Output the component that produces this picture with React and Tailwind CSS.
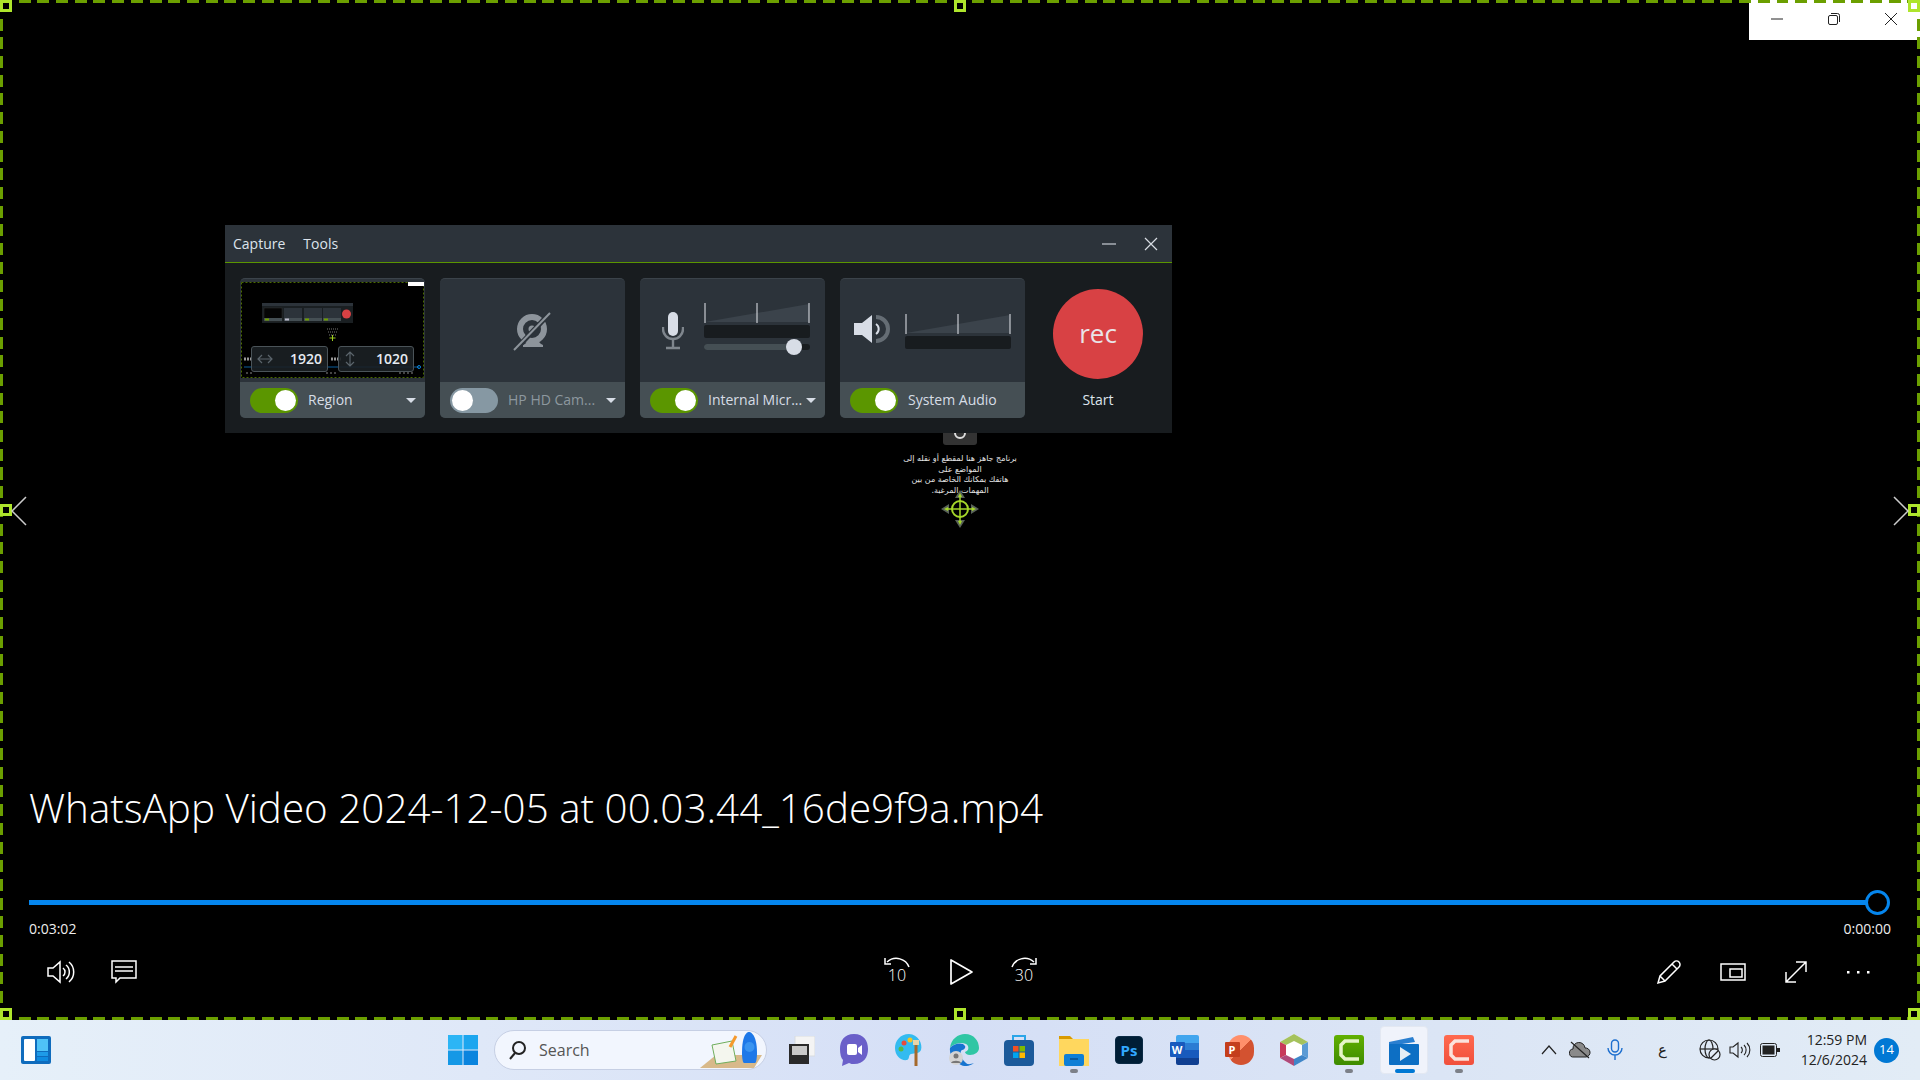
import { Fragment } from 'react';

const Toggle = ({ on }) => (
  <div className={`w-[48px] h-[25px] rounded-full flex items-center px-[2px] shrink-0 ${on ? 'bg-[#5b9600] justify-end' : 'bg-[#8698a3] justify-start'}`}>
    <div className="w-[21px] h-[21px] rounded-full bg-white" />
  </div>
);

const Caret = () => (
  <div className="w-0 h-0 border-l-[5px] border-r-[5px] border-t-[5px] border-l-transparent border-r-transparent border-t-[#d7dde6] shrink-0" />
);

const Card = ({ on, label, caret, dim, children }) => (
  <div className="w-[185px] h-[140px] rounded-[5px] overflow-hidden flex flex-col bg-[#2c333a] border-t border-[#3b434a]">
    <div className="h-[103px] shrink-0">{children}</div>
    <div className="h-[36px] bg-[#454f54] flex items-center pl-[10px]">
      <Toggle on={on} />
      <span className={`ml-[10px] text-[14px] leading-[18px] mb-[1px] whitespace-nowrap ${dim ? 'text-[#8d989f]' : 'text-[#d7dde6]'}`}>{label}</span>
      {caret && <div className="ml-auto mr-[9px]"><Caret /></div>}
    </div>
  </div>
);

const Meter = ({ w = 106 }) => (
  <svg width={w} height="20" viewBox="0 0 106 20">
    <path d="M1 19 L105 1 V19 Z" fill="#3b434b" />
    <path d="M1 0V20M53 0V20M105 0V20" stroke="#e6e9ee" strokeWidth="1" />
  </svg>
);

const MiniShot = () => (
  <svg width="183" height="96" viewBox="0 0 183 96">
    <rect width="183" height="96" fill="#000" />
    <rect x="0.5" y="0.5" width="182" height="95" fill="none" stroke="#4a6b00" strokeWidth="1" strokeDasharray="2 2" />
    <rect x="167" y="0" width="16" height="4" fill="#fff" />
    <rect x="21" y="21" width="91" height="20" fill="#1a1f22" />
    <rect x="21" y="21" width="91" height="3" fill="#2c333a" />
    <rect x="23" y="26" width="18" height="13" fill="#050505" stroke="#333" strokeWidth="0.500" />
    <rect x="43" y="26" width="18" height="13" fill="#2c333a" />
    <rect x="63" y="26" width="18" height="13" fill="#2c333a" />
    <rect x="82" y="26" width="18" height="13" fill="#2c333a" />
    <rect x="23" y="36" width="18" height="3" fill="#454f54" />
    <rect x="43" y="36" width="18" height="3" fill="#454f54" />
    <rect x="63" y="36" width="18" height="3" fill="#454f54" />
    <rect x="82" y="36" width="18" height="3" fill="#454f54" />
    <rect x="24" y="36.500" width="4" height="2" fill="#6fa000" />
    <rect x="64" y="36.500" width="4" height="2" fill="#6fa000" />
    <rect x="83" y="36.500" width="4" height="2" fill="#6fa000" />
    <rect x="44" y="36.500" width="4" height="2" fill="#bbc" />
    <circle cx="105.500" cy="32" r="4.500" fill="#d84144" />
    <path d="M86 47h11M87 50h9M88 53h7" stroke="#777" strokeWidth="1" strokeDasharray="1 1" />
    <path d="M91.500 53v6M88.500 56h6" stroke="#9ccc1f" strokeWidth="1" />
    <path d="M3 77h9M90 77h10" stroke="#999" strokeWidth="3" strokeDasharray="2 1" />
    <path d="M3 85H178" stroke="#0a5f9e" strokeWidth="1" />
    <circle cx="178" cy="85" r="1.500" fill="none" stroke="#0a84d8" />
    <path d="M5 91h8M85 91h12M158 91h14" stroke="#888" strokeWidth="1" strokeDasharray="2 2" />
  </svg>
);

const SizeBox = ({ w, icon, value }) => (
  <div className={`${w} h-[26px] rounded-[3px] bg-[#1b2024]/90 border border-[#4a5358] flex items-center justify-between pl-[5px] pr-[5px]`}>
    {icon}
    <span className="text-[14px] font-semibold text-[#e6ebf2] leading-none">{value}</span>
  </div>
);

const RegionPreview = () => (
  <div className="relative h-[103px] pt-[3px] px-[1px]">
    <MiniShot />
    <div className="absolute left-[11px] top-[67px] flex gap-[10px]">
      <SizeBox
        w="w-[77px]"
        value="1920"
        icon={
          <svg width="16" height="12" viewBox="0 0 16 12" fill="none" stroke="#5a646b" strokeWidth="1.200">
            <path d="M1 6H15M5 2 1 6l4 4M11 2l4 4-4 4" />
          </svg>
        }
      />
      <SizeBox
        w="w-[76px]"
        value="1020"
        icon={
          <svg width="12" height="16" viewBox="0 0 12 16" fill="none" stroke="#5a646b" strokeWidth="1.200">
            <path d="M6 1V15M2 5 6 1l4 4M2 11l4 4 4-4" />
          </svg>
        }
      />
    </div>
  </div>
);

const CamOff = () => (
  <div className="h-full flex items-center justify-center pt-[3px]">
    <svg width="42" height="42" viewBox="0 0 42 42" fill="none">
      <circle cx="20" cy="18" r="12" stroke="#8d949b" strokeWidth="6" />
      <circle cx="20" cy="18" r="3.500" fill="#8d949b" />
      <path d="M11 36h20v-2c-3-1-4-3-4-4H15c0 1-1 3-4 4z" fill="#8d949b" />
      <path d="M3 39 38 2" stroke="#2c333a" strokeWidth="5" />
      <path d="M2 39 38 2" stroke="#8d949b" strokeWidth="2" />
    </svg>
  </div>
);

const MicBody = () => (
  <div className="h-full flex pl-[22px] pt-[24px]">
    <svg width="22" height="38" viewBox="0 0 22 38" className="mt-[9px] shrink-0" fill="none">
      <rect x="6" y="0" width="10" height="24" rx="5" fill="#d8dde6" />
      <path d="M1 15v2a10 10 0 0 0 20 0v-2" stroke="#7f868d" strokeWidth="2.400" />
      <path d="M11 27v8M4 36h14" stroke="#7f868d" strokeWidth="2.400" />
    </svg>
    <div className="ml-[20px] flex flex-col w-[106px]">
      <Meter />
      <div className="mt-[2px] h-[13px] rounded-[2px] bg-[#181c1f]" />
      <div className="relative mt-[6px] h-[6px] rounded-full bg-[#181c1f]">
        <div className="h-full w-[84px] rounded-full bg-[#454f54]" />
        <div className="absolute left-[82px] top-[-5px] w-[16px] h-[16px] rounded-full bg-[#d8dde6]" />
      </div>
    </div>
  </div>
);

const SpeakerBody = () => (
  <div className="h-full flex pl-[14px] pt-[35px]">
    <svg width="36" height="30" viewBox="0 0 36 30" className="shrink-0" fill="none">
      <path d="M0 9h8L18 1v28L8 21H0z" fill="#d8dde6" />
      <path d="M22 10a6 6 0 0 1 0 10" stroke="#d8dde6" strokeWidth="2" />
      <path d="M22 3a12 12 0 0 1 0 24" stroke="#656d74" strokeWidth="4" />
    </svg>
    <div className="ml-[15px] flex flex-col w-[106px]">
      <Meter />
      <div className="mt-[2px] h-[13px] rounded-[2px] bg-[#181c1f]" />
    </div>
  </div>
);

const RecorderPanel = () => (
  <div className="w-[947px] h-[208px] bg-[#181c1f] flex flex-col font-['Open_Sans',sans-serif]">
    <div className="h-[38px] bg-[#2c333a] border-b border-[#5b9600] flex items-center pl-[8px] text-[14px] text-[#dde4ec] shrink-0">
      <span>Capture</span>
      <span className="ml-[18px]">Tools</span>
      <svg width="14" height="2" viewBox="0 0 14 2" className="ml-auto"><path d="M0 1H14" stroke="#c8ced4" strokeWidth="1.200" /></svg>
      <svg width="14" height="14" viewBox="0 0 14 14" className="ml-[28px] mr-[14px]"><path d="M1 1 13 13M13 1 1 13" stroke="#d8dde3" strokeWidth="1.200" /></svg>
    </div>
    <div className="flex pl-[15px] pt-[15px] gap-[15px]">
      <Card on label="Region" caret><RegionPreview /></Card>
      <Card label="HP HD Cam..." caret dim><CamOff /></Card>
      <Card on label="Internal Micr..." caret><MicBody /></Card>
      <Card on label="System Audio"><SpeakerBody /></Card>
      <div className="w-[106px] ml-[5px] flex flex-col items-center pt-[11px]">
        <div className="w-[90px] h-[90px] rounded-full bg-[#d84144] flex items-center justify-center text-[26px] leading-none text-[#e9e4e8] pb-[2px]">rec</div>
        <span className="mt-[10px] text-[14px] text-[#dde4ec]">Start</span>
      </div>
    </div>
  </div>
);

const Handle = ({ className }) => (
  <div className={`absolute w-[12px] h-[12px] border-[3px] border-[#aee52c] ${className}`} />
);

const DashFrame = () => (
  <Fragment>
    <div className="absolute left-0 top-0 w-full h-[3px] bg-[repeating-linear-gradient(90deg,#6b9f00_0_12px,transparent_12px_18.7px)]" />
    <div className="absolute left-0 bottom-0 w-full h-[3px] bg-[repeating-linear-gradient(90deg,#6b9f00_0_12px,transparent_12px_18.7px)]" />
    <div className="absolute left-0 top-0 h-full w-[3px] bg-[repeating-linear-gradient(180deg,#6b9f00_0_12px,transparent_12px_18.7px)]" />
    <div className="absolute right-0 top-0 h-full w-[3px] bg-[repeating-linear-gradient(180deg,#6b9f00_0_12px,transparent_12px_18.7px)]" />
    <Handle className="left-0 top-0 bg-black" />
    <Handle className="left-[954px] top-0 bg-black" />
    <Handle className="right-0 top-0 bg-white" />
    <Handle className="left-0 top-[504px] bg-black" />
    <Handle className="right-0 top-[504px] bg-black" />
    <Handle className="left-0 bottom-0 bg-black" />
    <Handle className="left-[954px] bottom-0 bg-black" />
    <Handle className="right-0 bottom-0 bg-black" />
  </Fragment>
);

const WindowButtons = () => (
  <div className="absolute right-0 top-0 w-[171px] h-[40px] bg-white flex items-center pl-[22px] pb-[2px] gap-[45px]">
    <svg width="12" height="2" viewBox="0 0 12 2"><path d="M0 1H12" stroke="#222" strokeWidth="1" /></svg>
    <svg width="12" height="12" viewBox="0 0 12 12" fill="none" stroke="#222"><rect x="0.500" y="2.500" width="9" height="9" rx="1.500" /><path d="M3 .5h6.500A2 2 0 0 1 11.500 2.500V9" /></svg>
    <svg width="12" height="12" viewBox="0 0 12 12"><path d="M0 0 12 12M12 0 0 12" stroke="#222" strokeWidth="1" /></svg>
  </div>
);

const CenterCursor = () => (
  <div className="absolute left-[860px] top-[433px] w-[200px] flex flex-col items-center">
    <div className="w-[34px] h-[12px] bg-[#333] rounded-b-[3px] flex items-start justify-center overflow-hidden">
      <svg width="14" height="8" viewBox="0 0 14 8" fill="none"><path d="M2 0a5 5 0 0 0 10 0" stroke="#ddd" strokeWidth="2" /></svg>
    </div>
    <div dir="rtl" className="mt-[9px] w-[120px] text-center text-[8px] leading-[10.500px] text-[#e4e4e4] font-['DejaVu_Sans',sans-serif]">
      <div className="whitespace-nowrap">برنامج جاهز هنا لمقطع أو نقله إلى</div>
      <div className="whitespace-nowrap">المواضع على</div>
      <div className="whitespace-nowrap">هاتفك بمكانك الخاصة من بين</div>
      <div className="whitespace-nowrap">المهمات المرغبة.</div>
    </div>
    <svg width="38" height="38" viewBox="0 0 38 38" fill="none" className="mt-[-6px]">
      <path d="M19 0 14 8h10zM19 38l-5-8h10zM0 19l8-5v10zM38 19l-8-5v10z" fill="#596358" />
      <path d="M19 3 17 7h4zM19 35l-2-4h4zM3 19l4-2v4zM35 19l-4-2v4z" fill="#a5d62a" />
      <circle cx="19" cy="19" r="8" stroke="#a5d62a" strokeWidth="2" />
      <path d="M19 5V33M5 19H33" stroke="#a5d62a" strokeWidth="1.500" />
    </svg>
  </div>
);

const Skip = ({ dir, label }) => (
  <div className="relative w-[28px] h-[32px] flex flex-col items-center">
    <svg width="26" height="12" viewBox="0 0 26 12" fill="none" stroke="#fff" strokeWidth="1.500" className={dir === 'fwd' ? '-scale-x-100' : ''}>
      <path d="M25 11C22 3 11-1 3 6" /><path d="M1 2v6h6" />
    </svg>
    <span className="text-[16px] leading-[18px] font-light mt-[-2px]">{label}</span>
  </div>
);

const Player = () => (
  <div className="absolute left-0 right-0 bottom-0 flex flex-col px-[29px] pb-[32px] text-white font-['Open_Sans',sans-serif]">
    <div className="text-[40.400px] font-light leading-[56px] whitespace-nowrap">WhatsApp Video 2024-12-05 at 00.03.44_16de9f9a.mp4</div>
    <div className="relative mt-[64px] h-[5px] mr-[13px] bg-[#0586ee]">
      <div className="absolute right-[-12px] top-[-10px] w-[25px] h-[25px] rounded-full border-[3px] border-[#0586ee] bg-black" />
    </div>
    <div className="mt-[15px] flex justify-between text-[14px] leading-[18px] text-[#eee]">
      <span>0:03:02</span>
      <span>0:00:00</span>
    </div>
    <div className="mt-[18px] h-[32px] relative flex items-center">
      <svg width="28" height="24" viewBox="0 0 28 24" fill="none" stroke="#fff" strokeWidth="1.500" className="ml-[18px]">
        <path d="M1 8h5l7-6v20l-7-6H1z" /><path d="M16 8a5 5 0 0 1 0 8M19 5a9 9 0 0 1 0 14M22 2a13 13 0 0 1 0 20" />
      </svg>
      <svg width="26" height="24" viewBox="0 0 26 24" fill="none" stroke="#fff" strokeWidth="1.500" className="ml-[36px]">
        <path d="M1 1h24v17H9l-4 4v-4H1z" /><path d="M4 7h18M4 11h18" />
      </svg>
      <div className="absolute left-[854px] top-0 flex items-center gap-[35px]">
        <Skip dir="back" label="10" />
        <svg width="26" height="28" viewBox="0 0 26 28" fill="none" stroke="#fff" strokeWidth="1.700" strokeLinejoin="round" className="ml-[2px] mr-[1px]"><path d="M3 2v24l21-12z" /></svg>
        <Skip dir="fwd" label="30" />
      </div>
      <div className="ml-auto flex items-center gap-[38px] mr-[21px]">
        <svg width="26" height="26" viewBox="0 0 26 26" fill="none" stroke="#fff" strokeWidth="1.500"><path d="M2 24l2-7L18 3a3 3 0 0 1 5 5L9 22zM4 17l5 5M16 5l5 5" /></svg>
        <svg width="26" height="18" viewBox="0 0 26 18" fill="none" stroke="#fff" strokeWidth="1.500"><rect x="1" y="1" width="24" height="16" /><rect x="10" y="6" width="12" height="8" /></svg>
        <svg width="24" height="24" viewBox="0 0 24 24" fill="none" stroke="#fff" strokeWidth="1.500"><path d="M2 22 22 2M12 2h10v10M2 12v10h10" /></svg>
        <svg width="24" height="4" viewBox="0 0 24 4" fill="#fff"><rect x="1" y="1" width="2.500" height="2.500" /><rect x="11" y="1" width="2.500" height="2.500" /><rect x="21" y="1" width="2.500" height="2.500" /></svg>
      </div>
    </div>
  </div>
);

const TbIcon = ({ children, active, dot }) => (
  <div className={`relative w-[48px] h-[48px] rounded-[4px] flex items-center justify-center ${active ? 'bg-[#f0f3fb] border border-[#e3e8f2]' : ''}`}>
    {children}
    {dot && <div className="absolute bottom-[1px] left-[20px] w-[8px] h-[4px] rounded-full bg-[#7c8088]" />}
    {active && <div className="absolute bottom-[0px] left-[14px] w-[20px] h-[4px] rounded-full bg-[#0078d4]" />}
  </div>
);

const Taskbar = () => (
  <div className="h-[60px] shrink-0 relative flex items-center bg-[linear-gradient(90deg,#e6f0f9_0%,#dfe8f8_25%,#d5dff6_50%,#dbe5f5_75%,#e2ecf6_100%)] font-['Open_Sans',sans-serif]">
    {/* widgets */}
    <svg width="30" height="28" viewBox="0 0 30 28" className="ml-[21px] shrink-0">
      <rect width="30" height="28" rx="2" fill="#0f6cbd" />
      <rect x="3" y="3" width="11" height="22" rx="1" fill="#fff" />
      <rect x="16" y="3" width="11" height="12" fill="#4fc3f7" />
      <rect x="16" y="16" width="11" height="4" fill="#1e9be8" />
      <rect x="16" y="21" width="11" height="4" fill="#0f8be0" />
    </svg>
    {/* start */}
    <svg width="30" height="30" viewBox="0 0 30 30" className="ml-[397px] shrink-0">
      <rect width="14.500" height="14.500" fill="#2cb5f5" />
      <rect x="15.500" width="14.500" height="14.500" fill="#1ca6ef" />
      <rect y="15.500" width="14.500" height="14.500" fill="#1598e6" />
      <rect x="15.500" y="15.500" width="14.500" height="14.500" fill="#0a84de" />
    </svg>
    {/* search */}
    <div className="ml-[16px] w-[273px] h-[40px] rounded-full bg-[#f2f6fe] border border-[#c6cfe4] flex items-center pl-[13px] relative shrink-0">
      <svg width="20" height="20" viewBox="0 0 20 20" fill="none" stroke="#222" strokeWidth="2"><circle cx="11" cy="8" r="6" /><path d="M7 13 2 19" /></svg>
      <span className="ml-[11px] text-[16px] text-[#555]">Search</span>
      <svg width="64" height="38" viewBox="0 0 64 38" className="absolute right-[2px] top-0">
        <path d="M0 37 16 24h46l-8 13z" fill="#d8b98a" />
        <path d="M12 14l20-4 4 20-20 3z" fill="#f4f6ee" stroke="#6fae5d" strokeWidth="1" />
        <path d="M30 16 36 5" stroke="#f59a2e" strokeWidth="3" />
        <path d="M42 22C42 6 46 1 49 1s8 5 8 21c0 6-1 10-2 10H44c-1 0-2-4-2-10z" fill="#1e78e8" />
        <circle cx="49.500" cy="16" r="5" fill="#3a94f0" />
      </svg>
    </div>
    {/* task view */}
    <svg width="26" height="28" viewBox="0 0 26 28" className="ml-[22px] shrink-0">
      <rect x="6" y="0" width="20" height="20" fill="#f4f4f4" stroke="#d8dce0" />
      <rect x="0" y="8" width="20" height="20" fill="#2a2a2a" />
      <rect x="3" y="10" width="15" height="9" fill="#c9c9c9" />
    </svg>
    <div className="ml-[15px] flex gap-[7px] shrink-0">
      <TbIcon>
        <svg width="30" height="34" viewBox="0 0 30 34"><path d="M15 1C5 1 1 8 1 16c0 5 1 9 3 11l-1 6 7-3c2 1 3 1 5 1 10 0 14-7 14-15S25 1 15 1z" fill="#6a5fc9" /><rect x="8" y="11" width="10" height="11" rx="2" fill="#fff" /><path d="M19 15l4-3v10l-4-3z" fill="#fff" /></svg>
      </TbIcon>
      <TbIcon>
        <svg width="28" height="34" viewBox="0 0 28 34"><path d="M14 1C5 1 0 8 0 15c0 8 6 13 12 12 3-1 1-5 4-6 4-1 8 0 10-4 2-6-3-16-12-16z" fill="#33bbf0" /><circle cx="9" cy="10" r="2.500" fill="#e84b3c" /><circle cx="15" cy="7" r="2.500" fill="#f5c422" /><circle cx="6" cy="16" r="2.500" fill="#56b947" /><path d="M21 10V33" stroke="#a5692c" strokeWidth="3" /><rect x="18" y="7" width="6" height="5" fill="#e8d5a8" /></svg>
      </TbIcon>
      <TbIcon>
        <svg width="30" height="32" viewBox="0 0 30 32"><path d="M1 14C2 5 9 0 16 0c9 0 14 7 14 14 0 4-4 7-9 7-3 0-5-2-5-3 3-1 4-3 3-6-3-5-14-3-18 2z" fill="#2fc6a4" /><path d="M1 14c4-5 13-6 15-2 1 2-1 4-3 4-3 2-1 9 4 13 2 2 5 1 8 0-4 3-9 4-13 2C6 28 0 22 1 14z" fill="#1674cf" /><circle cx="7" cy="24" r="7" fill="#d4d4d4" /><circle cx="7" cy="22" r="2.500" fill="#777" /><path d="M2 29c1-3 9-3 10 0z" fill="#777" /></svg>
      </TbIcon>
      <TbIcon>
        <svg width="30" height="32" viewBox="0 0 30 32"><path d="M9 6V2h12v4" fill="none" stroke="#2aa5e8" strokeWidth="2" /><rect y="6" width="30" height="26" rx="4" fill="#1c5a9a" /><rect x="9" y="12" width="5.500" height="5.500" fill="#f25022" /><rect x="15.500" y="12" width="5.500" height="5.500" fill="#7fba00" /><rect x="9" y="18.500" width="5.500" height="5.500" fill="#00a4ef" /><rect x="15.500" y="18.500" width="5.500" height="5.500" fill="#ffb900" /></svg>
      </TbIcon>
      <TbIcon dot>
        <svg width="30" height="32" viewBox="0 0 30 32"><path d="M0 2h11l3 3h-14z" fill="#d99a00" /><rect y="5" width="30" height="27" fill="#ffd75e" /><rect x="5" y="20" width="20" height="12" rx="2" fill="#0f7fd6" /><path d="M11 25h8" stroke="#0a4e8c" strokeWidth="1.500" /></svg>
      </TbIcon>
      <TbIcon>
        <div className="w-[28px] h-[28px] rounded-[4px] bg-[#001e36] flex items-center justify-center text-[#31a8ff] text-[15px] font-bold leading-none border border-[#0b2a44]">Ps</div>
      </TbIcon>
      <TbIcon>
        <div className="relative w-[29px] h-[30px]">
          <div className="absolute right-0 top-0 w-[23px] h-[30px] rounded-[2px] overflow-hidden flex flex-col">
            <div className="flex-1 bg-[#41a5ee]" /><div className="flex-1 bg-[#2b7cd3]" /><div className="flex-1 bg-[#185abd]" /><div className="flex-1 bg-[#103f91]" />
          </div>
          <div className="absolute left-0 top-[7px] w-[15px] h-[15px] rounded-[1px] bg-[#185abd] text-white text-[11px] font-bold flex items-center justify-center leading-none">W</div>
        </div>
      </TbIcon>
      <TbIcon>
        <div className="relative w-[29px] h-[30px]">
          <div className="absolute right-0 top-0 w-[26px] h-[30px] rounded-full bg-[linear-gradient(135deg,#ff8f6b_0_50%,#d35230_50%)]" />
          <div className="absolute left-0 top-[7px] w-[15px] h-[15px] rounded-[1px] bg-[#c43e1c] text-white text-[11px] font-bold flex items-center justify-center leading-none">P</div>
        </div>
      </TbIcon>
      <TbIcon>
        <svg width="28" height="32" viewBox="0 0 28 32"><path d="M14 0 28 8v16l-14 8L0 24V8z" fill="#fff" /><path d="M14 0 28 8l-6 3-8-4-8 4-6-3z" fill="#a5c25c" /><path d="M0 8l6 3v10l-6 3z" fill="#c83a5a" /><path d="M28 8l-6 3v10l6 3z" fill="#5b9bd5" /><path d="M0 24l6-3 8 4v7z" fill="#b04a7a" /><path d="M28 24l-6-3-8 4v7z" fill="#3f86c9" /></svg>
      </TbIcon>
      <TbIcon dot>
        <div className="w-[30px] h-[30px] rounded-[3px] bg-[linear-gradient(180deg,#62b000,#3d8b00)] flex items-center justify-center">
          <svg width="20" height="24" viewBox="0 0 20 24" fill="none"><path d="M20 3H6L2 7v10l4 4h14" stroke="#e6f5c8" strokeWidth="3.500" /></svg>
        </div>
      </TbIcon>
      <TbIcon active>
        <svg width="30" height="30" viewBox="0 0 30 30"><path d="M0 7 24 2l2 5-26 4z" fill="#2a7fd0" /><rect y="9" width="30" height="21" rx="1" fill="#0d6fc4" /><path d="M11 12l11 7-11 7z" fill="#e6eef5" /></svg>
      </TbIcon>
      <TbIcon dot>
        <div className="w-[30px] h-[30px] rounded-[3px] bg-[linear-gradient(180deg,#ff6a4f,#f04f3c)] flex items-center justify-center">
          <svg width="20" height="24" viewBox="0 0 20 24" fill="none"><path d="M20 3H6L2 7v10l4 4h14" stroke="#fbe3dd" strokeWidth="3.500" /></svg>
        </div>
      </TbIcon>
    </div>
    {/* tray */}
    <div className="ml-auto pr-[21px] flex items-center shrink-0">
      <svg width="16" height="10" viewBox="0 0 16 10" fill="none" stroke="#222" strokeWidth="1.200"><path d="M1 9 8 1l7 8" /></svg>
      <svg width="22" height="18" viewBox="0 0 22 18" className="ml-[12px]"><path d="M5 16a4 4 0 0 1-1-8 6 6 0 0 1 12-1 4.500 4.500 0 0 1 1 9z" fill="#8a8a8a" stroke="#222" /><path d="M2 1l18 16" stroke="#222" strokeWidth="1.200" /></svg>
      <svg width="16" height="22" viewBox="0 0 16 22" fill="none" stroke="#1d6fcf" strokeWidth="1.400" className="ml-[16px]"><rect x="4.500" y="1" width="7" height="12" rx="3.500" /><path d="M1 9a7 7 0 0 0 14 0M8 16v5" /></svg>
      <span className="ml-[35px] text-[15px] text-[#222] font-['DejaVu_Sans',sans-serif] leading-none">ع</span>
      <svg width="22" height="22" viewBox="0 0 22 22" fill="none" stroke="#222" strokeWidth="1.200" className="ml-[32px]"><circle cx="10" cy="10" r="9" /><ellipse cx="10" cy="10" rx="4" ry="9" /><path d="M1 10h18" /><circle cx="15.500" cy="15.500" r="5.500" fill="#e3ebf6" /><path d="M12 19l7-7" /></svg>
      <svg width="22" height="18" viewBox="0 0 22 18" fill="none" stroke="#222" strokeWidth="1.100" className="ml-[8px]"><path d="M1 6h3l5-4v14l-5-4H1z" /><path d="M12 6a4 4 0 0 1 0 6M15 4a7 7 0 0 1 0 10M18 2a10 10 0 0 1 0 14" /></svg>
      <svg width="20" height="14" viewBox="0 0 20 14" className="ml-[9px]"><rect x=".5" y=".5" width="16" height="13" rx="2" fill="none" stroke="#222" /><rect x="2.500" y="2.500" width="12" height="9" fill="#222" /><rect x="17" y="5" width="3" height="4" fill="#222" /></svg>
      <div className="ml-[7px] flex flex-col items-end text-[14px] leading-[20px] text-[#222] w-[80px]">
        <span>12:59 PM</span>
        <span>12/6/2024</span>
      </div>
      <div className="ml-[7px] w-[25px] h-[25px] rounded-full bg-[#0078d4] text-white text-[13px] flex items-center justify-center">14</div>
    </div>
  </div>
);

export default function App() {
  return (
    <div className="w-[1920px] h-[1080px] overflow-hidden flex flex-col bg-black">
      <div className="h-[1020px] shrink-0 relative pl-[225px] pt-[225px]">
        <CenterCursor />
        <RecorderPanel />
        <Player />
        <WindowButtons />
        <DashFrame />
        <svg width="16" height="30" viewBox="0 0 16 30" fill="none" stroke="#ccc" strokeWidth="1.500" className="absolute left-[11px] top-[496px]"><path d="M15 1 1 15l14 14" /></svg>
        <svg width="16" height="30" viewBox="0 0 16 30" fill="none" stroke="#ccc" strokeWidth="1.500" className="absolute right-[11px] top-[496px]"><path d="M1 1l14 14L1 29" /></svg>
      </div>
      <Taskbar />
    </div>
  );
}
